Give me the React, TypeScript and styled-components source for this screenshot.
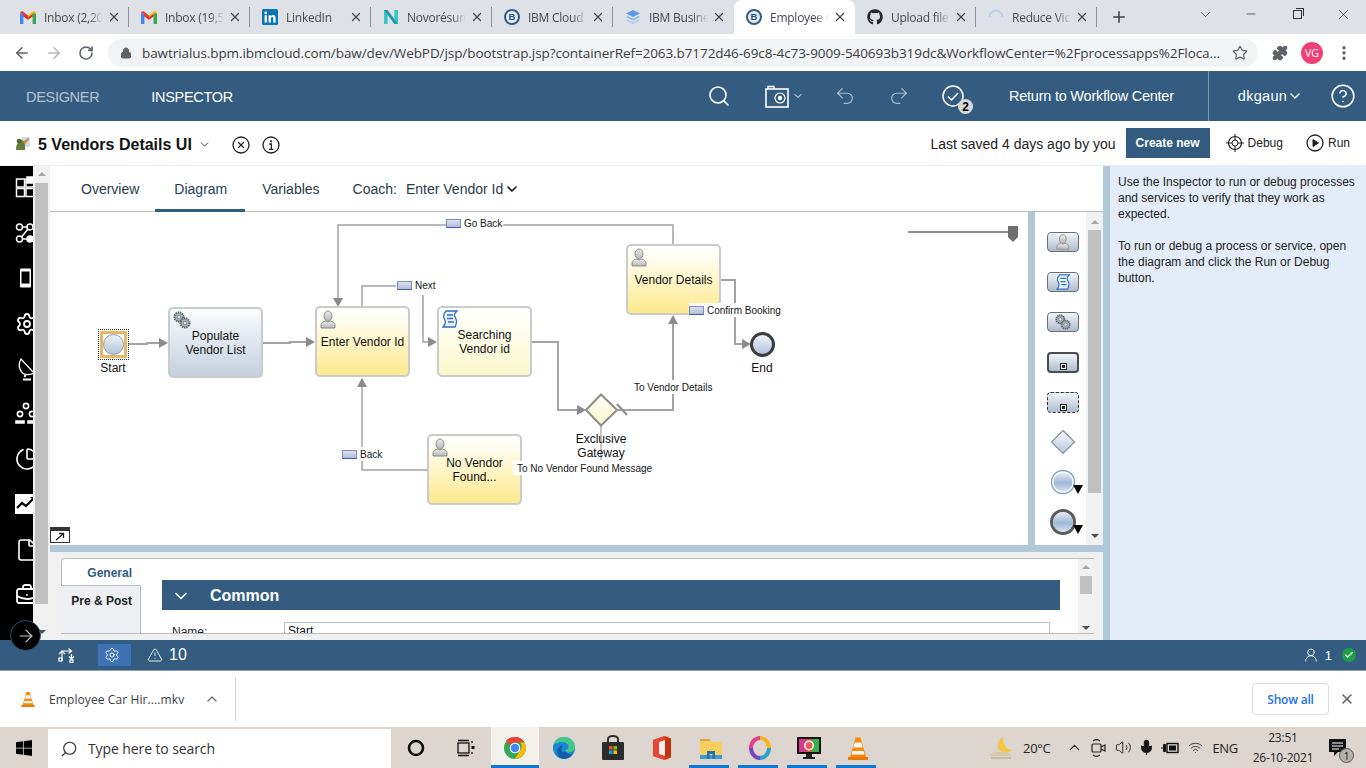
import React from "react";
import styled, { createGlobalStyle } from "styled-components";
import {
  ArrowLeft, ArrowRight, RotateCw, Lock, Star, Puzzle, MoreVertical, Minus, X, Plus, ChevronDown, ChevronUp,
  Search, Undo2, Redo2, CircleHelp, Settings, ChartPie, File, BriefcaseBusiness,
  TriangleAlert, UserRound, Check, Mic, Volume2, Wifi,
} from "lucide-react";
import { FaGithub } from "react-icons/fa";

const BLUE = "#335c80";
const SASH = "#b0c8d8";

const Global = createGlobalStyle`
  html, body { margin: 0; padding: 0; background: #fff; overflow: hidden; }
  * { box-sizing: border-box; }
  #root { width: 1366px; height: 768px; font-family: "Liberation Sans", Arial, sans-serif; }
`;

const Page = styled.div`
  position: relative;
  width: 1366px;
  height: 768px;
  display: flex;
  flex-direction: column;
  overflow: hidden;
`;

/* ---------- browser chrome ---------- */
const TabStrip = styled.div`
  height: 34px;
  background: #dee1e6;
  display: flex;
  padding-left: 8px;
  flex: none;
`;
const BrowserTab = styled.div<{ $active?: boolean; $sep?: boolean }>`
  position: relative;
  width: 121px;
  height: 34px;
  display: flex;
  align-items: center;
  padding: 0 8px 0 12px;
  background: ${(p) => (p.$active ? "#fff" : "transparent")};
  border-radius: ${(p) => (p.$active ? "8px 8px 0 0" : "0")};
  &::after {
    content: "";
    display: ${(p) => (p.$sep ? "block" : "none")};
    position: absolute;
    right: 0;
    top: 7px;
    height: 20px;
    width: 1px;
    background: #8e9296;
  }
`;
const Favicon = styled.span`
  width: 16px;
  height: 16px;
  flex: none;
  display: flex;
  align-items: center;
  justify-content: center;
`;
const TabTitle = styled.span`
  margin-left: 8px;
  width: 59px;
  flex: none;
  overflow: hidden;
  white-space: nowrap;
  font: 12px "Open Sans", sans-serif;
  letter-spacing: -0.25px;
  color: #45494f;
  -webkit-mask-image: linear-gradient(90deg, #000 75%, transparent 100%);
  mask-image: linear-gradient(90deg, #000 75%, transparent 100%);
`;
const TabClose = styled.span`
  margin-left: 4px;
  display: flex;
  color: #45494f;
`;
const NewTab = styled.span`
  margin-left: 13px;
  display: flex;
  align-items: center;
  color: #3c4043;
`;
const WindowControls = styled.div`
  margin-left: auto;
  display: flex;
  height: 28px;
`;
const WindowButton = styled.span`
  width: 46px;
  display: flex;
  align-items: center;
  justify-content: center;
  color: #2f3033;
`;
const RestoreGlyph = styled.span`
  position: relative;
  width: 9px;
  height: 9px;
  border: 1px solid #2f3033;
  &::before {
    content: "";
    position: absolute;
    top: -3px;
    right: -3px;
    width: 7px;
    height: 7px;
    border-top: 1px solid #2f3033;
    border-right: 1px solid #2f3033;
  }
`;
const AddressRow = styled.div`
  height: 37px;
  flex: none;
  background: #fff;
  display: flex;
  align-items: center;
  padding-left: 6px;
`;
const NavButton = styled.span<{ $dim?: boolean }>`
  width: 32px;
  display: flex;
  justify-content: center;
  color: ${(p) => (p.$dim ? "#b4b7ba" : "#5f6368")};
`;
const Omnibox = styled.div`
  margin-left: 6px;
  width: 1150px;
  height: 28px;
  border-radius: 14px;
  background: #f1f3f4;
  display: flex;
  align-items: center;
  padding-left: 12px;
  color: #5f6368;
`;
const UrlText = styled.span`
  margin-left: 10px;
  width: 1080px;
  flex: none;
  overflow: hidden;
  white-space: nowrap;
  font: 13.5px "Open Sans", sans-serif;
  letter-spacing: -0.08px;
  color: #3b3e42;
`;
const OmniStar = styled.span`
  margin-left: 10px;
  display: flex;
`;
const ExtButton = styled.span<{ $ml: number }>`
  margin-left: ${(p) => p.$ml}px;
  display: flex;
  width: 32px;
  justify-content: center;
  color: #5f6368;
`;
const Avatar = styled.span`
  margin-left: 5px;
  width: 22px;
  height: 22px;
  border-radius: 50%;
  background: #ee3f76;
  color: #fff;
  font: 10.5px "Open Sans", sans-serif;
  display: flex;
  align-items: center;
  justify-content: center;
`;

/* ---------- app header ---------- */
const Header = styled.header`
  height: 50px;
  flex: none;
  background: ${BLUE};
  display: flex;
  align-items: center;
  padding-left: 26px;
  color: #fff;
`;
const ModeLink = styled.span<{ $on?: boolean; $gap?: number }>`
  margin-left: ${(p) => p.$gap ?? 0}px;
  padding-top: 2px;
  font-size: 14.5px;
  letter-spacing: -0.3px;
  color: ${(p) => (p.$on ? "#fff" : "#b3c3d0")};
`;
const HeaderItem = styled.span<{ $ml: number }>`
  position: relative;
  margin-left: ${(p) => p.$ml}px;
  display: flex;
  align-items: center;
  flex: none;
`;
const HeaderText = styled.span<{ $ml: number; $track?: number }>`
  margin-left: ${(p) => p.$ml}px;
  font-size: 14.5px;
  letter-spacing: ${(p) => p.$track ?? 0}px;
  white-space: nowrap;
`;
const HeaderDivider = styled.span<{ $ml: number }>`
  margin-left: ${(p) => p.$ml}px;
  align-self: stretch;
  width: 1px;
  background: #7f9bb2;
`;
const CountBadge = styled.span`
  position: absolute;
  right: -9px;
  bottom: -7px;
  width: 15px;
  height: 15px;
  border-radius: 50%;
  background: #d9d9d9;
  color: #000;
  font-size: 12px;
  font-weight: bold;
  display: flex;
  align-items: center;
  justify-content: center;
`;

/* ---------- title bar ---------- */
const TitleBar = styled.div`
  height: 45px;
  flex: none;
  background: #fff;
  display: flex;
  align-items: center;
  padding-left: 15px;
  border-bottom: 1px solid #ececec;
`;
const AppName = styled.span`
  margin-left: 7px;
  padding-top: 3px;
  font-size: 16px;
  font-weight: bold;
  color: #111;
  white-space: nowrap;
`;
const TitleIcon = styled.span<{ $ml: number }>`
  margin-left: ${(p) => p.$ml}px;
  padding-top: 3px;
  display: flex;
  align-items: center;
  color: #222;
  flex: none;
`;
const SavedText = styled.span`
  margin-left: auto;
  padding-top: 2px;
  font-size: 14px;
  color: #222;
  white-space: nowrap;
`;
const CreateButton = styled.span`
  margin-left: 10px;
  width: 84px;
  height: 30px;
  background: ${BLUE};
  color: #fff;
  font-size: 12px;
  font-weight: bold;
  display: flex;
  align-items: center;
  justify-content: center;
`;
const RunAction = styled.span<{ $ml: number; $mr?: number }>`
  margin-left: ${(p) => p.$ml}px;
  margin-right: ${(p) => p.$mr ?? 0}px;
  display: flex;
  align-items: center;
  gap: 4px;
  font-size: 12px;
  color: #222;
`;

/* ---------- main ---------- */
const Main = styled.div`
  flex: 1;
  display: flex;
  min-height: 0;
`;
const Rail = styled.nav`
  width: 33px;
  flex: none;
  background: #000;
  overflow: hidden;
  display: flex;
  flex-direction: column;
  gap: 21.2px;
  padding: 10px 0 0 15px;
  color: #fff;
`;
const RailIcon = styled.span`
  width: 24px;
  height: 24px;
  flex: none;
  display: flex;
  align-items: center;
  justify-content: center;
`;
const RailScroll = styled.div`
  width: 17px;
  flex: none;
  background: #f1f1f1;
  display: flex;
  flex-direction: column;
  align-items: center;
`;
const ArrowUp = styled.span`
  margin-top: 6px;
  width: 0;
  height: 0;
  border-left: 4px solid transparent;
  border-right: 4px solid transparent;
  border-bottom: 4px solid #a6a6a6;
`;
const ArrowDown = styled.span`
  display: block;
  width: 0;
  height: 0;
  border-left: 4px solid transparent;
  border-right: 4px solid transparent;
  border-top: 4px solid #505050;
`;
const RailThumb = styled.div`
  margin-top: 7px;
  width: 13px;
  height: 421px;
  background: #c0c0c0;
`;
const RailDown = styled.div`
  margin-top: 26px;
`;
const Center = styled.div`
  width: 1053px;
  flex: none;
  display: flex;
  flex-direction: column;
  background: #fff;
`;
const EditorTabs = styled.div`
  height: 46px;
  flex: none;
  display: flex;
  align-items: stretch;
  padding-left: 14px;
  border-bottom: 1px solid #b8bcc0;
  font-size: 14px;
`;
const EditorTab = styled.div<{ $active?: boolean }>`
  padding: 3px ${(p) => (p.$active ? 18 : 16)}px 0 ${(p) => (p.$active ? 19 : 17)}px;
  display: flex;
  align-items: center;
  gap: 9px;
  white-space: nowrap;
  height: 46px;
  border-bottom: 3px solid ${(p) => (p.$active ? BLUE : "transparent")};
  color: ${(p) => (p.$active ? "#24405a" : "#2a3b4a")};
`;
const CoachChevron = styled.span`
  margin-left: -8px;
  display: flex;
  color: #111;
`;
const DiagramRow = styled.div`
  height: 333px;
  flex: none;
  display: flex;
`;
const Canvas = styled.div`
  position: relative;
  width: 978px;
  flex: none;
  overflow: hidden;
  background: #fff;
`;
const Wires = styled.svg`
  position: absolute;
  inset: 0;
`;
const VSash = styled.div`
  width: 7px;
  flex: none;
  background: ${SASH};
`;
const HSash = styled.div`
  height: 7px;
  flex: none;
  background: ${SASH};
`;
const Palette = styled.div`
  flex: 1;
  display: flex;
  background: #fff;
`;
const PaletteItems = styled.div`
  width: 51px;
  flex: none;
  display: flex;
  flex-direction: column;
  align-items: center;
  padding: 20px 0 0 5px;
`;
const PaletteButton = styled.span<{ $mt: number; $kind?: "task" | "sub" | "event" }>`
  position: relative;
  margin-top: ${(p) => p.$mt}px;
  width: 32px;
  height: ${(p) => (p.$kind && p.$kind !== "task" ? 21 : 20)}px;
  flex: none;
  display: flex;
  align-items: center;
  justify-content: center;
  border-radius: 4px;
  background: linear-gradient(#f2f5f8, #aebccf);
  border: ${(p) =>
    p.$kind === "sub" ? "2px solid #4c4c4c" : p.$kind === "event" ? "1px dashed #333" : "1px solid #6e6e6e"};
`;
const PlusBox = styled.span`
  position: absolute;
  bottom: 1px;
  left: 50%;
  margin-left: -3px;
  width: 7px;
  height: 7px;
  background: #fff;
  border: 1px solid #222;
  &::after {
    content: "";
    position: absolute;
    left: 1px;
    top: 1px;
    width: 3px;
    height: 3px;
    background: #222;
  }
`;
const PaletteGlyph = styled.span<{ $mt: number }>`
  position: relative;
  margin-top: ${(p) => p.$mt}px;
  height: 26px;
  width: 34px;
  flex: none;
  display: flex;
  justify-content: center;
`;
const PaletteCaret = styled.span`
  position: absolute;
  right: -3px;
  bottom: 1px;
  width: 0;
  height: 0;
  border-left: 5px solid transparent;
  border-right: 5px solid transparent;
  border-top: 9px solid #000;
`;
const PaletteScroll = styled.div`
  flex: 1;
  background: #f1f1f1;
  display: flex;
  flex-direction: column;
  align-items: center;
  padding-top: 2px;
`;
const PaletteThumb = styled.div`
  margin-top: 6px;
  width: 13px;
  height: 263px;
  background: #c0c0c0;
`;
const PaletteDown = styled.div`
  margin-top: 41px;
`;

const Node = styled.div<{ $x: number; $y: number; $w: number; $h: number; $tone: "blue" | "gold" | "pale" }>`
  position: absolute;
  left: ${(p) => p.$x - 50}px;
  top: ${(p) => p.$y - 212}px;
  width: ${(p) => p.$w}px;
  height: ${(p) => p.$h}px;
  border: 2px solid #c9cbcc;
  border-radius: 5px;
  background: ${(p) =>
    p.$tone === "blue"
      ? "linear-gradient(#fbfcfd, #c4d0de)"
      : p.$tone === "gold"
      ? "linear-gradient(#fffffa 10%, #fee98c)"
      : "linear-gradient(#fffffb 10%, #f9f7cb)"};
  display: flex;
  align-items: center;
  justify-content: center;
  text-align: center;
  font-size: 12px;
  line-height: 14px;
  color: #111;
  padding: 0 2px;
`;
const NodeIcon = styled.span`
  position: absolute;
  left: 3px;
  top: 2px;
  display: flex;
`;
const EventFrame = styled.div<{ $x: number; $y: number }>`
  position: absolute;
  left: ${(p) => p.$x - 50}px;
  top: ${(p) => p.$y - 212}px;
  width: 31px;
  height: 31px;
  border: 1px dotted #333;
  padding: 1px;
`;
const EventSelect = styled.div`
  width: 27px;
  height: 27px;
  border: 3px solid #e6b765;
  display: flex;
  align-items: center;
  justify-content: center;
`;
const EventCircle = styled.div<{ $end?: boolean }>`
  width: ${(p) => (p.$end ? 25 : 21)}px;
  height: ${(p) => (p.$end ? 25 : 21)}px;
  flex: none;
  border-radius: 50%;
  border: ${(p) => (p.$end ? "3px solid #3c3c3c" : "1px solid #8d9aa8")};
  background: linear-gradient(#eef2f7, #b3c5dc);
`;
const EndWrap = styled.div<{ $x: number; $y: number }>`
  position: absolute;
  left: ${(p) => p.$x - 50}px;
  top: ${(p) => p.$y - 212}px;
`;
const NodeLabel = styled.div<{ $cx: number; $y: number }>`
  position: absolute;
  left: ${(p) => p.$cx - 50 - 50}px;
  top: ${(p) => p.$y - 212}px;
  width: 100px;
  text-align: center;
  font-size: 12px;
  line-height: 14px;
  color: #111;
`;
const WireLabel = styled.div<{ $x: number; $y: number }>`
  position: absolute;
  left: ${(p) => p.$x - 50}px;
  top: ${(p) => p.$y - 212}px;
  height: 14px;
  background: #fff;
  display: flex;
  align-items: center;
  gap: 3px;
  padding: 0 1px 0 0;
  font-size: 10px;
  white-space: nowrap;
  color: #161616;
`;
const WireText = styled.span<{ $pad?: number }>`
  padding-left: ${(p) => p.$pad ?? 0}px;
`;
const MessageChip = styled.span`
  width: 15px;
  height: 9px;
  flex: none;
  border: 1px solid #7c8cc4;
  border-bottom-color: #3f5aa6;
  background: linear-gradient(#dde1ee, #b4bdd6);
`;
const ExpandGlyph = styled.div`
  position: absolute;
  left: 0;
  bottom: 2px;
  width: 20px;
  height: 16px;
  border: 1px solid #333;
  border-top-width: 4px;
  background: #fff;
  display: flex;
  align-items: center;
  justify-content: center;
`;

/* ---------- properties ---------- */
const Props = styled.div`
  flex: 1;
  min-height: 0;
  background: #f0f0f0;
  padding: 6px 9px 6px 11px;
  display: flex;
`;
const PropTabs = styled.div`
  width: 80px;
  flex: none;
  display: flex;
  flex-direction: column;
  font-size: 12px;
`;
const PropTab = styled.div<{ $active?: boolean }>`
  height: ${(p) => (p.$active ? "28px" : "auto")};
  flex: ${(p) => (p.$active ? "none" : "1")};
  background: ${(p) => (p.$active ? "#fff" : "#eeeff2")};
  color: ${(p) => (p.$active ? BLUE : "#222")};
  font-weight: bold;
  border-top: ${(p) => (p.$active ? "1px solid #b5bcc2" : "none")};
  border-left: ${(p) => (p.$active ? "1px solid #b5bcc2" : "none")};
  border-bottom: 1px solid #b5bcc2;
  border-right: ${(p) => (p.$active ? "none" : "1px solid #b5bcc2")};
  border-radius: ${(p) => (p.$active ? "4px 0 0 0" : "0")};
  padding: ${(p) => (p.$active ? "7px 9px 0 0" : "8px 8px 0 0")};
  text-align: right;
`;
const PropBody = styled.div`
  flex: 1;
  min-width: 0;
  background: #fff;
  border-top: 1px solid #b5bcc2;
  border-bottom: 1px solid #b5bcc2;
  display: flex;
`;
const PropContent = styled.div`
  flex: 1;
  overflow: hidden;
  padding: 21px 18px 0 21px;
`;
const SectionHead = styled.div`
  height: 30px;
  background: ${BLUE};
  color: #fff;
  display: flex;
  align-items: center;
  padding: 1px 0 0 9px;
  gap: 19px;
  font-size: 16px;
  font-weight: bold;
`;
const FieldRow = styled.div`
  margin-top: 12px;
  display: flex;
  font-size: 12px;
  color: #222;
  padding-left: 10px;
`;
const FieldLabel = styled.span`
  width: 112px;
  flex: none;
  padding-top: 3px;
`;
const FieldInput = styled.div`
  width: 766px;
  height: 20px;
  flex: none;
  border: 1px solid #b5bcc2;
  padding: 1px 3px;
  color: #111;
`;
const PropScroll = styled.div`
  width: 16px;
  flex: none;
  background: #f1f1f1;
  display: flex;
  flex-direction: column;
  align-items: center;
`;
const PropThumb = styled.div`
  margin-top: 7px;
  width: 12px;
  height: 18px;
  background: #c0c0c0;
`;
const PropDown = styled.div`
  margin-top: 32px;
`;
const Inspector = styled.aside`
  flex: 1;
  display: flex;
  background: #e4ecfa;
`;
const InspectorText = styled.div`
  padding: 8px 8px 0 8px;
  font-size: 12px;
  line-height: 16px;
  color: #222;
`;
const InspectorPara = styled.p`
  margin: 0 0 16px;
`;
const FloatArrow = styled.div`
  position: absolute;
  left: 10px;
  top: 620px;
  width: 31px;
  height: 31px;
  border-radius: 50%;
  background: #000;
  border: 1px solid #2c5372;
  display: flex;
  align-items: center;
  justify-content: center;
  color: #c8c8c8;
`;

/* ---------- status bar ---------- */
const StatusBar = styled.div`
  height: 31px;
  flex: none;
  background: ${BLUE};
  color: #fff;
  display: flex;
  align-items: center;
  padding-left: 58px;
  border-bottom: 1px solid #8aa3b8;
`;
const StatusCell = styled.span<{ $ml?: number; $on?: boolean }>`
  margin-left: ${(p) => p.$ml ?? 0}px;
  width: ${(p) => (p.$on ? "33px" : "auto")};
  height: ${(p) => (p.$on ? "22px" : "auto")};
  padding-right: ${(p) => (p.$on ? "5px" : "0")};
  background: ${(p) => (p.$on ? "#3d72b4" : "transparent")};
  display: flex;
  align-items: center;
  justify-content: center;
  gap: 6px;
  font-size: 16px;
`;
const StatusCount = styled.span`
  font-size: 13px;
`;
const OkDot = styled.span`
  margin-left: 10px;
  margin-right: 10px;
  width: 14px;
  height: 14px;
  border-radius: 50%;
  background: #1f9d48;
  display: flex;
  align-items: center;
  justify-content: center;
`;
const Spacer = styled.span`
  flex: 1;
`;

/* ---------- downloads ---------- */
const DownloadBar = styled.div`
  height: 56px;
  flex: none;
  background: #fff;
  display: flex;
  align-items: center;
  padding-left: 20px;
`;
const FileName = styled.span`
  margin-left: 13px;
  font: 12px "Open Sans", sans-serif;
  letter-spacing: 0.1px;
  color: #3c4043;
  white-space: nowrap;
`;
const DownloadChevron = styled.span`
  margin-left: 20px;
  display: flex;
  color: #6c7074;
`;
const DownloadDivider = styled.span`
  margin-left: 15px;
  width: 1px;
  height: 44px;
  background: #d0d2d4;
`;
const ShowAll = styled.span`
  margin-left: auto;
  width: 77px;
  height: 32px;
  border: 1px solid #dadce0;
  border-radius: 4px;
  color: #1a73e8;
  font: 600 12px "Open Sans", sans-serif;
  letter-spacing: -0.2px;
  display: flex;
  align-items: center;
  justify-content: center;
`;
const DownloadClose = styled.span`
  margin: 0 11px 0 10px;
  display: flex;
  color: #5f6368;
`;

/* ---------- taskbar ---------- */
const Taskbar = styled.div`
  height: 41px;
  flex: none;
  background: #ddd6d0;
  display: flex;
  align-items: flex-end;
`;
const StartButton = styled.span`
  width: 48px;
  height: 41px;
  flex: none;
  display: flex;
  align-items: center;
  justify-content: center;
`;
const SearchBox = styled.div`
  width: 343px;
  height: 39px;
  flex: none;
  background: #fff;
  display: flex;
  align-items: center;
  padding-left: 12px;
  color: #333;
`;
const SearchGlass = styled.span`
  display: flex;
  transform: scaleX(-1);
`;
const SearchHint = styled.span`
  margin-left: 10px;
  font: 14px "Open Sans", sans-serif;
  letter-spacing: -0.1px;
  color: #333;
`;
const TaskCell = styled.span<{ $w?: number; $active?: boolean; $run?: boolean }>`
  position: relative;
  width: ${(p) => p.$w ?? 49}px;
  height: 41px;
  flex: none;
  display: flex;
  align-items: center;
  justify-content: center;
  background: ${(p) => (p.$active ? "#f3efeb" : "transparent")};
  &::after {
    content: "";
    display: ${(p) => (p.$run || p.$active ? "block" : "none")};
    position: absolute;
    left: ${(p) => (p.$active ? 0 : 3)}px;
    right: ${(p) => (p.$active ? 0 : 6)}px;
    bottom: 0;
    height: 3px;
    background: #0a78d4;
  }
`;
const Tray = styled.div`
  margin-left: auto;
  height: 41px;
  display: flex;
  align-items: center;
  color: #222;
`;
const TrayText = styled.span<{ $ml: number }>`
  margin-left: ${(p) => p.$ml}px;
  font: 13px "Open Sans", sans-serif;
  letter-spacing: -0.3px;
  white-space: nowrap;
`;
const TrayIcon = styled.span<{ $ml: number }>`
  margin-left: ${(p) => p.$ml}px;
  display: flex;
  align-items: center;
  flex: none;
`;
const Clock = styled.div`
  margin-left: 12px;
  width: 66px;
  text-align: center;
  font: 12px/20px "Open Sans", sans-serif;
  letter-spacing: -0.2px;
  color: #222;
`;
const Notify = styled.span`
  position: relative;
  margin: 0 19px 0 12px;
  display: flex;
`;
const NotifyBadge = styled.span`
  position: absolute;
  right: -7px;
  bottom: -6px;
  width: 15px;
  height: 15px;
  border-radius: 50%;
  background: #b5b2ae;
  border: 1px solid #555;
  font: 10px "Open Sans", sans-serif;
  display: flex;
  align-items: center;
  justify-content: center;
  color: #111;
`;

/* ---------- drawings ---------- */
const Gmail = () => (
  <svg width="16" height="13" viewBox="0 0 16 13">
    <path d="M0 2.200C0 .6 1.700-.3 3 .6L8 4.400 8 7.600 0 2.200Z" fill="#ea4335" />
    <path d="M16 2.200C16 .6 14.300-.3 13 .6L8 4.400 8 7.600 16 2.200Z" fill="#f6b704" />
    <rect x="0" y="2.400" width="3.400" height="10.600" rx=".6" fill="#4285f4" />
    <rect x="12.600" y="2.400" width="3.400" height="10.600" rx=".6" fill="#34a853" />
    <path d="M3.400 3 8 6.400 12.600 3v2.400L8 8.800 3.400 5.400Z" fill="#d93025" />
  </svg>
);
const LinkedIn = () => (
  <svg width="16" height="16" viewBox="0 0 16 16">
    <rect width="16" height="16" rx="1.500" fill="#0a76b4" />
    <rect x="2.600" y="6.200" width="2.300" height="7.200" fill="#fff" />
    <circle cx="3.750" cy="3.900" r="1.350" fill="#fff" />
    <path d="M6.600 6.200h2.200v1c.5-.8 1.300-1.200 2.300-1.200 1.800 0 2.500 1.200 2.500 3v4.400h-2.300V9.500c0-.9-.3-1.500-1.100-1.500-.9 0-1.300.6-1.300 1.500v3.900H6.600Z" fill="#fff" />
  </svg>
);
const Novo = () => (
  <svg width="16" height="16" viewBox="0 0 16 16">
    <path d="M1 1h3.600v14H1Z" fill="#35c7c2" />
    <path d="M11.400 1H15v14h-3.600Z" fill="#35c7c2" />
    <path d="M1 1h3.600l10.400 14h-3.600Z" fill="#1c9aa6" />
  </svg>
);
const IbmB = () => (
  <svg width="16" height="16" viewBox="0 0 16 16">
    <circle cx="8" cy="8" r="7" fill="#e8eef5" stroke="#2f5b8e" strokeWidth="2" />
    <text x="8" y="11.300" textAnchor="middle" fontFamily="Liberation Sans, sans-serif" fontWeight="bold" fontSize="9.500" fill="#234c7c">B</text>
  </svg>
);
const IbmStack = () => (
  <svg width="16" height="16" viewBox="0 0 16 16">
    <path d="M8 1 15 4.500 8 8 1 4.500Z" fill="#5b9ce6" />
    <path d="M2.600 7 8 9.800 13.400 7 15 8 8 11.400 1 8Z" fill="#86b8ee" />
    <path d="M2.600 10.400 8 13.200l5.400-2.800 1.600 1L8 15l-7-3.600Z" fill="#a9cdf3" />
  </svg>
);
const Spinner = () => (
  <svg width="16" height="16" viewBox="0 0 16 16">
    <path d="M1.500 8A6.500 6.500 0 0 1 14.500 8" fill="none" stroke="#bcd0ee" strokeWidth="2" />
  </svg>
);
const Camera = () => (
  <svg width="25" height="23" viewBox="0 0 25 23" fill="none" stroke="#fff">
    <rect x="1" y="4" width="22" height="18" strokeWidth="1.600" />
    <path d="M3 4V1.500h6V4" strokeWidth="1.400" />
    <circle cx="15" cy="13" r="5" strokeWidth="1.200" />
    <circle cx="15" cy="13" r="2.200" fill="#fff" stroke="none" />
  </svg>
);
const TaskCheck = () => (
  <svg width="22" height="22" viewBox="0 0 22 22" fill="none" stroke="#fff" strokeWidth="1.500">
    <circle cx="11" cy="11" r="10" />
    <path d="M6 11.500 9.500 15 16 8" />
  </svg>
);
const VendorsLogo = () => (
  <svg width="16" height="16" viewBox="0 0 16 16">
    <rect x="7" y="2" width="8" height="10" fill="#cfdde8" />
    <path d="M1 15c0-4 1-7 3-8l2-3 2 2 2 1v8Z" fill="#5f7f3a" />
    <circle cx="4" cy="6" r="2.300" fill="#4b6b2b" />
    <path d="M8 7l5-4 1 1.500-4 5Z" fill="#d88a28" />
  </svg>
);
const CircleCross = () => (
  <svg width="18" height="18" viewBox="0 0 18 18" fill="none" stroke="#222" strokeWidth="1.300">
    <circle cx="9" cy="9" r="8" />
    <path d="m6 6 6 6M12 6l-6 6" />
  </svg>
);
const CircleInfo = () => (
  <svg width="18" height="18" viewBox="0 0 18 18" fill="none" stroke="#222">
    <circle cx="9" cy="9" r="8" strokeWidth="1.300" />
    <circle cx="9" cy="5.300" r="1.100" fill="#222" stroke="none" />
    <path d="M7.200 8h2.200v5M7 13.300h4.400" strokeWidth="1.300" />
  </svg>
);
const DebugIcon = () => (
  <svg width="18" height="18" viewBox="0 0 18 18" fill="none" stroke="#222">
    <circle cx="9" cy="9" r="6.500" strokeWidth="1.200" />
    <circle cx="9" cy="9" r="3" strokeWidth="1" />
    <path d="M9 0v6M9 12v6M0 9h6M12 9h6" strokeWidth="1.100" />
  </svg>
);
const RunIcon = () => (
  <svg width="18" height="18" viewBox="0 0 18 18" fill="none" stroke="#222">
    <circle cx="9" cy="9" r="8" strokeWidth="1.300" />
    <path d="M7 5.500v7l5.500-3.500Z" fill="#222" />
  </svg>
);
const RailGrid = () => (
  <svg width="24" height="24" viewBox="0 0 24 24" fill="none" stroke="#fff" strokeWidth="1.500">
    <rect x="1.500" y="3" width="8" height="8" />
    <rect x="11" y="3" width="8" height="8" />
    <rect x="1.500" y="12.500" width="8" height="8" />
    <rect x="11" y="12.500" width="8" height="8" />
    <rect x="12" y="1" width="6" height="6" fill="#fff" />
  </svg>
);
const RailNet = () => (
  <svg width="24" height="24" viewBox="0 0 24 24" fill="none" stroke="#fff" strokeWidth="1.500">
    <circle cx="4.500" cy="6" r="3" />
    <circle cx="15" cy="6" r="3" />
    <circle cx="4.500" cy="18" r="3" />
    <circle cx="15" cy="18" r="3" fill="#fff" />
    <path d="M7.500 6h4.500M7.500 18h4.500M6.500 16 13 8" />
  </svg>
);
const RailPhone = () => (
  <svg width="24" height="24" viewBox="0 0 24 24">
    <rect x="5" y="2.500" width="11" height="19" rx="1" fill="#fff" />
    <rect x="6.500" y="5.500" width="8" height="12" fill="#000" />
  </svg>
);
const RailDish = () => (
  <svg width="24" height="24" viewBox="0 0 24 24" fill="none" stroke="#fff" strokeWidth="1.300">
    <path d="M6 2C3 7 4 13 8 16.500c3 1.500 7 1.500 11-.5Z" />
    <path d="M11 17l-1.500 3M8 22.500h8" strokeWidth="2" />
  </svg>
);
const RailTeam = () => (
  <svg width="24" height="24" viewBox="0 0 24 24" fill="none" stroke="#fff" strokeWidth="1.600">
    <circle cx="11" cy="4" r="2.600" />
    <circle cx="5" cy="12" r="2.600" />
    <circle cx="17" cy="12" r="2.600" />
    <path d="M1 19h8v2H1ZM13 19h8v2h-8Z" fill="#fff" />
  </svg>
);
const RailTrend = () => (
  <svg width="24" height="24" viewBox="0 0 24 24">
    <rect x="0" y="2" width="24" height="20" fill="#fff" />
    <path d="M2 16l5-5 4 3 8-8" fill="none" stroke="#000" strokeWidth="2.200" />
    <path d="M15 5h6v6Z" fill="#000" />
  </svg>
);
const Person = ({ h = 20 }: { h?: number }) => (
  <svg width={(h * 16) / 20} height={h} viewBox="0 0 16 20">
    <defs>
      <linearGradient id="pg" x1="0" y1="0" x2="0" y2="1">
        <stop offset="0" stopColor="#eeeeee" />
        <stop offset="1" stopColor="#b4b4b4" />
      </linearGradient>
    </defs>
    <ellipse cx="8" cy="6" rx="4" ry="5" fill="url(#pg)" stroke="#8e8e8e" />
    <path d="M1 18v-3c0-2.200 2.500-3.500 4.500-4 1.500 1 3.500 1 5 0 2 .5 4.500 1.800 4.500 4v3Z" fill="url(#pg)" stroke="#8e8e8e" />
  </svg>
);
const Gears = ({ s = 18 }: { s?: number }) => (
  <svg width={s} height={s} viewBox="0 0 18 18">
    <g stroke="#59626c">
      <circle cx="6" cy="6" r="4.600" strokeDasharray="1.400 .8" strokeWidth="2" fill="#aab2bb" />
      <circle cx="12" cy="12" r="4.600" strokeDasharray="1.400 .8" strokeWidth="2" fill="#aab2bb" />
    </g>
    <circle cx="6" cy="6" r="1.800" fill="#dfe3e7" stroke="#555" strokeWidth=".5" />
    <circle cx="12" cy="12" r="1.800" fill="#dfe3e7" stroke="#555" strokeWidth=".5" />
  </svg>
);
const Scroll = ({ s = 18 }: { s?: number }) => (
  <svg width={(s * 16) / 18} height={s} viewBox="0 0 16 18">
    <path d="M4 1h11c-2 2-3 3-2.500 4.500L14 9c1 2 1 4-1 8H1c2-2 3-4 2-6.500L2 8C1 5 2 3 4 1Z" fill="#e9f0fb" stroke="#2f6fc4" strokeWidth="1.300" />
    <path d="M5 5h6M5 8.500h6M6 12h6" stroke="#2f6fc4" strokeWidth="1.300" />
  </svg>
);
const Diamond = () => (
  <svg width="26" height="26" viewBox="0 0 26 26">
    <defs>
      <linearGradient id="pd" x1="0" y1="0" x2="0" y2="1">
        <stop offset="0" stopColor="#f7f9fb" />
        <stop offset="1" stopColor="#b9c8dc" />
      </linearGradient>
    </defs>
    <path d="M13 1.500 24.500 13 13 24.500 1.500 13Z" fill="url(#pd)" stroke="#8a8f96" strokeWidth="1.200" />
  </svg>
);
const PaletteEvent = ({ dark }: { dark?: boolean }) => (
  <svg width="26" height="26" viewBox="0 0 26 26">
    <defs>
      <linearGradient id={dark ? "pe2" : "pe1"} x1="0" y1="0" x2="0" y2="1">
        <stop offset="0" stopColor="#e7edf4" />
        <stop offset=".55" stopColor="#9db8d6" />
        <stop offset="1" stopColor="#d6e2ef" />
      </linearGradient>
    </defs>
    <circle cx="13" cy="13" r="11.500" fill="#fff" stroke={dark ? "#5c5c5c" : "#7fa2c2"} strokeWidth={dark ? 3 : 1.400} />
    <circle cx="13" cy="13" r={dark ? 10 : 9.500} fill={`url(#${dark ? "pe2" : "pe1"})`} />
  </svg>
);
const WinLogo = () => (
  <svg width="16" height="16" viewBox="0 0 16 16" fill="#000">
    <path d="M0 2.300 6.900 1.300V7.700H0ZM7.700 1.200 16 0V7.700H7.700ZM0 8.400H6.900V14.700L0 13.700ZM7.700 8.400H16V16L7.700 14.800Z" />
  </svg>
);
const ChromeLogo = () => (
  <svg width="24" height="24" viewBox="0 0 24 24">
    <circle cx="12" cy="12" r="11" fill="#34a853" />
    <path d="M12 1a11 11 0 0 1 9.500 5.500H12a5.500 5.500 0 0 0-5 3L3 4.500A11 11 0 0 1 12 1Z" fill="#ea4335" />
    <path d="M21.500 6.500A11 11 0 0 1 12 23l4.800-8.200a5.500 5.500 0 0 0 .2-8.300Z" fill="#fbbc05" />
    <circle cx="12" cy="12" r="5.300" fill="#fff" />
    <circle cx="12" cy="12" r="4.200" fill="#4285f4" />
  </svg>
);
const EdgeLogo = () => (
  <svg width="24" height="24" viewBox="0 0 24 24">
    <circle cx="12" cy="12" r="11" fill="#1b84d6" />
    <path d="M12 1c6 0 11 4.500 11 10 0 3.500-3 5.500-6 5.500-2.500 0-4-1-4.500-2.500 2.500.5 4-1 4-3 0-3-3-5-6.500-5C6 6 2.500 8 1.500 9 2.500 4.500 6.500 1 12 1Z" fill="#43c88c" />
    <path d="M13 14c.8 3 3.500 5 7.500 3.800A11 11 0 0 1 12 23c-4 0-7-4-7-8 0-3 3-5.500 6-5.500-1 1-2 3-1.500 5s3.500 3 3.500-.5Z" fill="#0f5fa8" />
  </svg>
);
const StoreLogo = () => (
  <svg width="24" height="26" viewBox="0 0 24 26">
    <rect x="1" y="7" width="22" height="18" rx="1" fill="#2b2b2b" />
    <path d="M7 9V4a5 3 0 0 1 10 0v5" fill="none" stroke="#2b2b2b" strokeWidth="2" />
    <rect x="8" y="11" width="3.600" height="3.600" fill="#f25022" />
    <rect x="12.400" y="11" width="3.600" height="3.600" fill="#7fba00" />
    <rect x="8" y="15.400" width="3.600" height="3.600" fill="#00a4ef" />
    <rect x="12.400" y="15.400" width="3.600" height="3.600" fill="#ffb900" />
  </svg>
);
const OfficeLogo = () => (
  <svg width="22" height="26" viewBox="0 0 22 26">
    <path d="M2 5 14 1l6 2.500v19L14 25 2 21Z" fill="#d83b01" />
    <path d="M2 21 14 25V21L8 19V7l6-2V1L2 5Z" fill="#ea4335" />
    <path d="M8 7l6-2v16l-6-2Z" fill="#f3efeb" />
    <path d="M14 5v16l6 1.500v-19Z" fill="#c4310c" />
  </svg>
);
const FolderLogo = () => (
  <svg width="24" height="24" viewBox="0 0 24 24">
    <path d="M1 3h9l2 3h11v17H1Z" fill="#f7cf5c" />
    <path d="M1 3h9l2 2H1Z" fill="#d6a63a" />
    <rect x="1" y="19" width="22" height="4" fill="#3d98d8" />
    <path d="M8 23v-8h8v8h-2.500v-5h-3v5Z" fill="#2570b3" />
  </svg>
);
const RingLogo = () => (
  <svg width="22" height="26" viewBox="0 0 22 26" fill="none">
    <path d="M11 3a9 10 0 0 1 9 10" stroke="#f4b41a" strokeWidth="4" />
    <path d="M20 13a9 10 0 0 1-9 10" stroke="#28a5c9" strokeWidth="4" />
    <path d="M11 23a9 10 0 0 1-9-10" stroke="#7a46c0" strokeWidth="4" />
    <path d="M2 13a9 10 0 0 1 9-10" stroke="#e33f8c" strokeWidth="4" />
  </svg>
);
const RecLogo = () => (
  <svg width="24" height="24" viewBox="0 0 24 24">
    <rect x="0" y="1" width="24" height="17" fill="#111" />
    <rect x="2" y="3" width="20" height="13" fill="#e4503c" />
    <rect x="2" y="3" width="7" height="13" fill="#d33a8c" />
    <rect x="15" y="3" width="7" height="13" fill="#36b24a" />
    <circle cx="12" cy="9.500" r="5" fill="#fff" />
    <circle cx="12" cy="9.500" r="3.500" fill="#ef5b5b" />
    <rect x="9" y="18" width="6" height="3" fill="#222" />
    <rect x="6" y="21" width="12" height="2" fill="#222" />
  </svg>
);
const VlcCone = ({ s = 24 }: { s?: number }) => (
  <svg width={s} height={s} viewBox="0 0 24 24">
    <path d="M2 21h20v3H2Z" fill="#e97a0c" />
    <path d="M9.500 1.500h5L20 21H4Z" fill="#f58a0b" />
    <path d="M8.700 6.500h6.600l1.300 5H7.300ZM6.500 15h11l1 3.500h-13Z" fill="#f4f4f4" />
  </svg>
);
const CortanaRing = () => (
  <svg width="20" height="20" viewBox="0 0 20 20" fill="none" stroke="#111" strokeWidth="2.600">
    <circle cx="10" cy="10" r="7" />
  </svg>
);
const TaskView = () => (
  <svg width="18" height="20" viewBox="0 0 18 20" fill="none" stroke="#111" strokeWidth="1.300">
    <rect x="1" y="5" width="11" height="10" />
    <path d="M1 2.500h11M1 17.500h11" />
    <rect x="14.500" y="8" width="3" height="3" fill="#111" stroke="none" />
    <path d="M15 3v2M15 14v2" />
  </svg>
);
const Weather = () => (
  <svg width="26" height="24" viewBox="0 0 26 24">
    <path d="M15 1c-3 2-6 6-5 11 1 3 4 4 8 4 3 0 5-1 6-2-5 0-9-4-9-13Z" fill="#f6c73a" />
    <path d="M1 19c3-3 7-4 11-3 3-1 7-1 11 2v2H4Z" fill="#d9c9a8" />
    <path d="M3 22h20" stroke="#c2b49a" strokeWidth="1.500" />
  </svg>
);
const MeetIcon = () => (
  <svg width="16" height="20" viewBox="0 0 16 20" fill="none" stroke="#222" strokeWidth="1.200">
    <rect x="1" y="6" width="9" height="8" rx="1" />
    <path d="M10 9l4-2v6l-4-2M2 3c2-1.500 5-1.500 7 0M2 17c2 1.500 5 1.500 7 0" />
  </svg>
);
const BatteryPlug = () => (
  <svg width="18" height="14" viewBox="0 0 18 14">
    <rect x="6" y="2.500" width="11" height="9" fill="none" stroke="#111" strokeWidth="1.400" />
    <rect x="8" y="4.500" width="7" height="5" fill="#111" />
    <path d="M0 7h3M2.500 3.500v7M2.500 3.500h2v7h-2" fill="#111" stroke="#111" />
  </svg>
);
const NotifyGlyph = () => (
  <svg width="19" height="19" viewBox="0 0 19 19">
    <path d="M1 1h17v13H10l-4 4v-4H1Z" fill="#111" />
    <path d="M4 5h11M4 8h11M4 11h7" stroke="#fff" strokeWidth="1" />
  </svg>
);
const TransferIcon = () => (
  <svg width="17" height="15" viewBox="0 0 17 15" fill="none" stroke="#fff" strokeWidth="1.200">
    <path d="M4 13V3h9M10.500.5 13.500 3l-3 2.500M13.500 6v4.500M11 8.500 13.500 11 16 8.500" />
    <path d="M1 6 4 3l3 3" />
    <rect x="1" y="10" width="3" height="3" />
    <rect x="12" y="12" width="3" height="2.500" />
  </svg>
);

const WIRE = "#a3a3a3";
const Arrow = ({ x, y, dir }: { x: number; y: number; dir: "r" | "u" | "d" }) => {
  const pts =
    dir === "r"
      ? `${x},${y} ${x - 9},${y - 5} ${x - 9},${y + 5}`
      : dir === "u"
      ? `${x},${y} ${x - 5},${y + 9} ${x + 5},${y + 9}`
      : `${x},${y} ${x - 5},${y - 9} ${x + 5},${y - 9}`;
  return <polygon points={pts} fill="#8b8b8b" />;
};

const Diagram = () => (
  <Canvas>
    <Wires width="978" height="333" viewBox="50 212 978 333" fill="none">
      <g stroke={WIRE} strokeWidth="2">
        <path d="M128 344H147V343H160" />
        <path d="M263 343H290V342H307" />
        <path d="M673 245V225H338V298" strokeWidth="1.500" />
        <path d="M362 306V286H396" strokeWidth="1.500" />
        <path d="M423 295V342H430" strokeWidth="1.500" />
        <path d="M532 342H558V410H578" />
        <path d="M618 410H673V320" />
        <path d="M427 470H362V387" strokeWidth="1.500" />
        <path d="M721 280H735V344H742" />
      </g>
      <path d="M601 425V460" stroke="#8b8b8b" strokeWidth="1" />
      <path d="M617 404 627 415" stroke="#8b8b8b" strokeWidth="2" />
      <Arrow x={168} y={343} dir="r" />
      <Arrow x={315} y={342} dir="r" />
      <Arrow x={338} y={307} dir="d" />
      <Arrow x={437} y={342} dir="r" />
      <Arrow x={586} y={410} dir="r" />
      <Arrow x={673} y={315} dir="u" />
      <Arrow x={362} y={378} dir="u" />
      <Arrow x={751} y={344} dir="r" />
      <path d="M586 410 601 394.500 617 410 601 425.500Z" fill="url(#gw)" stroke="#8c8c8c" strokeWidth="2" />
      <defs>
        <linearGradient id="gw" x1="0" y1="0" x2="0" y2="1">
          <stop offset="0" stopColor="#fffffb" />
          <stop offset="1" stopColor="#f7f5c6" />
        </linearGradient>
      </defs>
      <path d="M908 232H1008" stroke="#8a8a8a" strokeWidth="2" />
      <path d="M1008 226H1018V237L1013 242 1008 237Z" fill="#6f6f6f" />
    </Wires>

    <EventFrame $x={98} $y={329}>
      <EventSelect>
        <EventCircle />
      </EventSelect>
    </EventFrame>
    <NodeLabel $cx={113} $y={361}>Start</NodeLabel>

    <Node $x={168} $y={307} $w={95} $h={71} $tone="blue">
      <NodeIcon><Gears /></NodeIcon>
      Populate<br />Vendor List
    </Node>
    <Node $x={315} $y={306} $w={95} $h={71} $tone="gold">
      <NodeIcon><Person /></NodeIcon>
      Enter Vendor Id
    </Node>
    <Node $x={437} $y={306} $w={95} $h={71} $tone="pale">
      <NodeIcon><Scroll /></NodeIcon>
      Searching<br />Vendor id
    </Node>
    <Node $x={427} $y={434} $w={95} $h={71} $tone="gold">
      <NodeIcon><Person /></NodeIcon>
      No Vendor<br />Found...
    </Node>
    <Node $x={626} $y={244} $w={95} $h={71} $tone="gold">
      <NodeIcon><Person /></NodeIcon>
      Vendor Details
    </Node>

    <NodeLabel $cx={601} $y={432}>Exclusive<br />Gateway</NodeLabel>
    <EndWrap $x={750} $y={332}><EventCircle $end /></EndWrap>
    <NodeLabel $cx={762} $y={361}>End</NodeLabel>

    <WireLabel $x={446} $y={216}><MessageChip /><WireText>Go Back</WireText></WireLabel>
    <WireLabel $x={397} $y={278}><MessageChip /><WireText>Next</WireText></WireLabel>
    <WireLabel $x={689} $y={303}><MessageChip /><WireText>Confirm Booking</WireText></WireLabel>
    <WireLabel $x={342} $y={447}><MessageChip /><WireText>Back</WireText></WireLabel>
    <WireLabel $x={634} $y={380}><WireText>To Vendor Details</WireText></WireLabel>
    <WireLabel $x={513} $y={461}><WireText $pad={4}>To No Vendor Found Message</WireText></WireLabel>

    <ExpandGlyph>
      <svg width="10" height="9" viewBox="0 0 10 9" fill="none" stroke="#222" strokeWidth="1.300">
        <path d="M1 8 8 2M4 1.500h4.500V6" />
      </svg>
    </ExpandGlyph>
  </Canvas>
);

const tabs: { title: string; icon: React.ReactNode; active?: boolean; sep?: boolean }[] = [
  { title: "Inbox (2,20", icon: <Gmail />, sep: true },
  { title: "Inbox (19,5", icon: <Gmail />, sep: true },
  { title: "LinkedIn", icon: <LinkedIn />, sep: true },
  { title: "Novorésum", icon: <Novo />, sep: true },
  { title: "IBM Cloud", icon: <IbmB />, sep: true },
  { title: "IBM Busine", icon: <IbmStack /> },
  { title: "Employee C", icon: <IbmB />, active: true },
  { title: "Upload file", icon: <FaGithub size={16} color="#24292e" />, sep: true },
  { title: "Reduce Vic", icon: <Spinner />, sep: true },
];

const railIcons = [
  <RailGrid />,
  <RailNet />,
  <RailPhone />,
  <Settings size={24} strokeWidth={1.8} />,
  <RailDish />,
  <RailTeam />,
  <ChartPie size={24} strokeWidth={1.6} />,
  <RailTrend />,
  <File size={24} strokeWidth={1.6} />,
  <BriefcaseBusiness size={24} strokeWidth={1.8} />,
];

export default function App() {
  return (
    <Page>
      <Global />
      <TabStrip>
        {tabs.map((t) => (
          <BrowserTab key={t.title} $active={t.active} $sep={t.sep}>
            <Favicon>{t.icon}</Favicon>
            <TabTitle>{t.title}</TabTitle>
            <TabClose><X size={14} strokeWidth={2.2} /></TabClose>
          </BrowserTab>
        ))}
        <NewTab><Plus size={18} strokeWidth={2} /></NewTab>
        <WindowControls>
          <WindowButton><ChevronDown size={17} strokeWidth={1} /></WindowButton>
          <WindowButton><Minus size={14} strokeWidth={1.2} /></WindowButton>
          <WindowButton><RestoreGlyph /></WindowButton>
          <WindowButton><X size={17} strokeWidth={1} /></WindowButton>
        </WindowControls>
      </TabStrip>
      <AddressRow>
        <NavButton><ArrowLeft size={18} /></NavButton>
        <NavButton $dim><ArrowRight size={18} /></NavButton>
        <NavButton><RotateCw size={16} strokeWidth={2.4} /></NavButton>
        <Omnibox>
          <Lock size={12} fill="#5f6368" />
          <UrlText>bawtrialus.bpm.ibmcloud.com/baw/dev/WebPD/jsp/bootstrap.jsp?containerRef=2063.b7172d46-69c8-4c73-9009-540693b319dc&WorkflowCenter=%2Fprocessapps%2Floca...</UrlText>
          <OmniStar><Star size={16} strokeWidth={1.8} /></OmniStar>
        </Omnibox>
        <ExtButton $ml={6}><Puzzle size={16} fill="#5f6368" /></ExtButton>
        <Avatar>VG</Avatar>
        <ExtButton $ml={5}><MoreVertical size={18} strokeWidth={2.4} /></ExtButton>
      </AddressRow>

      <Header>
        <ModeLink>DESIGNER</ModeLink>
        <ModeLink $on $gap={52}>INSPECTOR</ModeLink>
        <HeaderItem $ml={474}><Search size={24} strokeWidth={1.6} /></HeaderItem>
        <HeaderItem $ml={34}><Camera /></HeaderItem>
        <HeaderItem $ml={2}><ChevronDown size={12} strokeWidth={2} /></HeaderItem>
        <HeaderItem $ml={30}><Undo2 size={22} strokeWidth={1.3} color="#a9bccb" /></HeaderItem>
        <HeaderItem $ml={32}><Redo2 size={22} strokeWidth={1.3} color="#a9bccb" /></HeaderItem>
        <HeaderItem $ml={32}><TaskCheck /><CountBadge>2</CountBadge></HeaderItem>
        <HeaderText $ml={45} $track={-0.23}>Return to Workflow Center</HeaderText>
        <HeaderDivider $ml={34} />
        <HeaderText $ml={29} $track={0.3}>dkgaun</HeaderText>
        <HeaderItem $ml={0}><ChevronDown size={16} strokeWidth={2} /></HeaderItem>
        <HeaderItem $ml={27}><CircleHelp size={26} strokeWidth={1.4} /></HeaderItem>
      </Header>

      <TitleBar>
        <VendorsLogo />
        <AppName>5 Vendors Details UI</AppName>
        <TitleIcon $ml={6}><ChevronDown size={13} strokeWidth={1.6} /></TitleIcon>
        <TitleIcon $ml={21}><CircleCross /></TitleIcon>
        <TitleIcon $ml={12}><CircleInfo /></TitleIcon>
        <SavedText>Last saved 4 days ago by you</SavedText>
        <CreateButton>Create new</CreateButton>
        <RunAction $ml={16}><DebugIcon />Debug</RunAction>
        <RunAction $ml={23} $mr={16}><RunIcon />Run</RunAction>
      </TitleBar>

      <Main>
        <Rail>
          {railIcons.map((icon, i) => (
            <RailIcon key={i}>{icon}</RailIcon>
          ))}
        </Rail>
        <RailScroll>
          <ArrowUp />
          <RailThumb />
          <RailDown><ArrowDown /></RailDown>
        </RailScroll>
        <Center>
          <EditorTabs>
            <EditorTab>Overview</EditorTab>
            <EditorTab $active>Diagram</EditorTab>
            <EditorTab>Variables</EditorTab>
            <EditorTab>
              <span>Coach:</span>
              <span>Enter Vendor Id</span>
              <CoachChevron><ChevronDown size={16} strokeWidth={2.4} /></CoachChevron>
            </EditorTab>
          </EditorTabs>
          <DiagramRow>
            <Diagram />
            <VSash />
            <Palette>
              <PaletteItems>
                <PaletteButton $mt={0}><Person h={17} /></PaletteButton>
                <PaletteButton $mt={20}><Scroll s={16} /></PaletteButton>
                <PaletteButton $mt={20}><Gears s={16} /></PaletteButton>
                <PaletteButton $mt={20} $kind="sub"><PlusBox /></PaletteButton>
                <PaletteButton $mt={19} $kind="event"><PlusBox /></PaletteButton>
                <PaletteGlyph $mt={16}><Diamond /></PaletteGlyph>
                <PaletteGlyph $mt={14}><PaletteEvent /><PaletteCaret /></PaletteGlyph>
                <PaletteGlyph $mt={14}><PaletteEvent dark /><PaletteCaret /></PaletteGlyph>
              </PaletteItems>
              <PaletteScroll>
                <ArrowUp />
                <PaletteThumb />
                <PaletteDown><ArrowDown /></PaletteDown>
              </PaletteScroll>
            </Palette>
          </DiagramRow>
          <HSash />
          <Props>
            <PropTabs>
              <PropTab $active>General</PropTab>
              <PropTab>Pre &amp; Post</PropTab>
            </PropTabs>
            <PropBody>
              <PropContent>
                <SectionHead>
                  <ChevronDown size={20} strokeWidth={2} />
                  Common
                </SectionHead>
                <FieldRow>
                  <FieldLabel>Name:</FieldLabel>
                  <FieldInput>Start</FieldInput>
                </FieldRow>
              </PropContent>
              <PropScroll>
                <ArrowUp />
                <PropThumb />
                <PropDown><ArrowDown /></PropDown>
              </PropScroll>
            </PropBody>
          </Props>
        </Center>
        <VSash />
        <Inspector>
          <InspectorText>
            <InspectorPara>Use the Inspector to run or debug processes and services to verify that they work as expected.</InspectorPara>
            <InspectorPara>To run or debug a process or service, open the diagram and click the Run or Debug button.</InspectorPara>
          </InspectorText>
        </Inspector>
      </Main>

      <StatusBar>
        <StatusCell><TransferIcon /></StatusCell>
        <StatusCell $ml={23} $on><Settings size={16} strokeWidth={1.4} /></StatusCell>
        <StatusCell $ml={16}><TriangleAlert size={16} strokeWidth={1.3} />10</StatusCell>
        <Spacer />
        <StatusCell><UserRound size={16} strokeWidth={1.4} /><StatusCount>1</StatusCount></StatusCell>
        <OkDot><Check size={10} strokeWidth={3} color="#fff" /></OkDot>
      </StatusBar>

      <DownloadBar>
        <VlcCone s={16} />
        <FileName>Employee Car Hir....mkv</FileName>
        <DownloadChevron><ChevronUp size={16} strokeWidth={2} /></DownloadChevron>
        <DownloadDivider />
        <ShowAll>Show all</ShowAll>
        <DownloadClose><X size={16} strokeWidth={2.4} /></DownloadClose>
      </DownloadBar>

      <Taskbar>
        <StartButton><WinLogo /></StartButton>
        <SearchBox>
          <SearchGlass><Search size={18} strokeWidth={1.5} /></SearchGlass>
          <SearchHint>Type here to search</SearchHint>
        </SearchBox>
        <TaskCell $w={49}><CortanaRing /></TaskCell>
        <TaskCell $w={51}><TaskView /></TaskCell>
        <TaskCell $active $w={48}><ChromeLogo /></TaskCell>
        <TaskCell><EdgeLogo /></TaskCell>
        <TaskCell><StoreLogo /></TaskCell>
        <TaskCell><OfficeLogo /></TaskCell>
        <TaskCell $run><FolderLogo /></TaskCell>
        <TaskCell $run><RingLogo /></TaskCell>
        <TaskCell $run><RecLogo /></TaskCell>
        <TaskCell $run><VlcCone /></TaskCell>
        <Tray>
          <TrayIcon $ml={0}><Weather /></TrayIcon>
          <TrayText $ml={9}>20°C</TrayText>
          <TrayIcon $ml={16}><ChevronUp size={17} strokeWidth={1.6} /></TrayIcon>
          <TrayIcon $ml={8}><MeetIcon /></TrayIcon>
          <TrayIcon $ml={8}><Volume2 size={17} strokeWidth={1.3} /></TrayIcon>
          <TrayIcon $ml={6}><Mic size={17} fill="#111" strokeWidth={1.6} /></TrayIcon>
          <TrayIcon $ml={6}><BatteryPlug /></TrayIcon>
          <TrayIcon $ml={9}><Wifi size={15} strokeWidth={1.3} /></TrayIcon>
          <TrayText $ml={9}>ENG</TrayText>
          <Clock>23:51<br />26-10-2021</Clock>
          <Notify><NotifyGlyph /><NotifyBadge>1</NotifyBadge></Notify>
        </Tray>
      </Taskbar>
      <FloatArrow><ArrowRight size={20} strokeWidth={1.4} /></FloatArrow>
    </Page>
  );
}
